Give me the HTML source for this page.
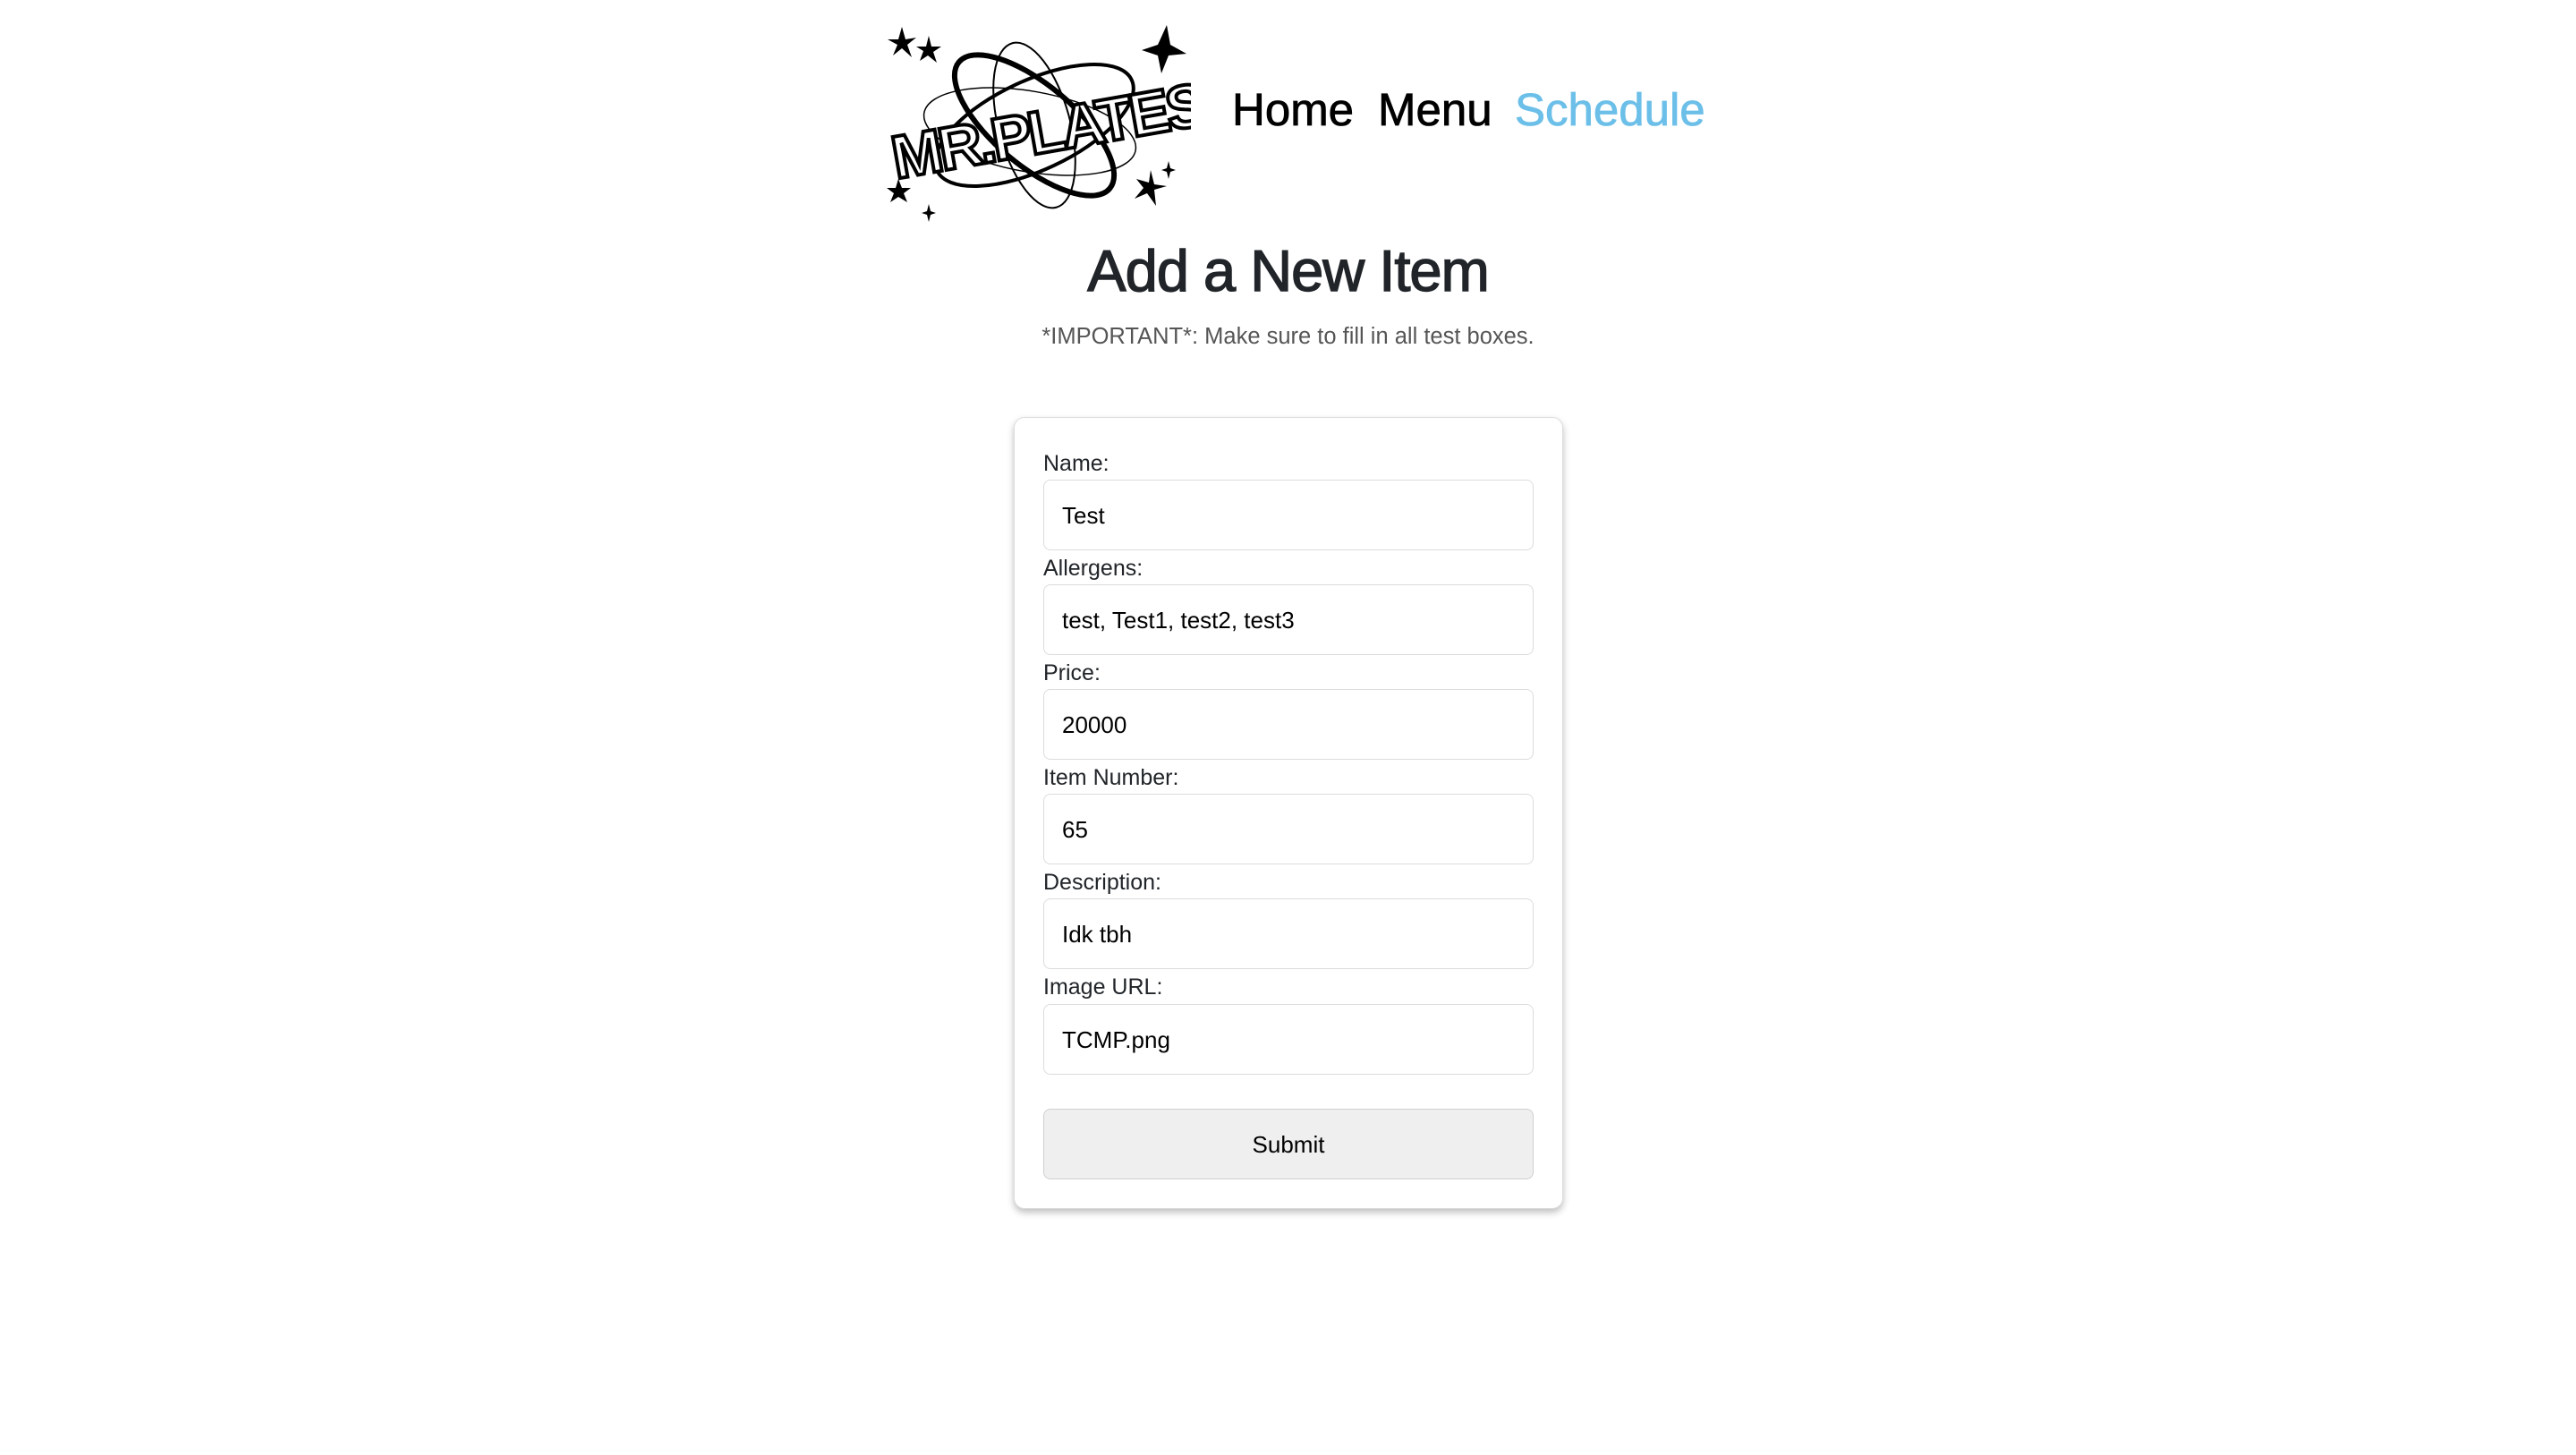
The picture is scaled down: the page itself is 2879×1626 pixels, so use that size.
<!DOCTYPE html>
<html><head><meta charset="utf-8"><style>
html,body{margin:0;padding:0;background:#fff;width:2879px;height:1626px;overflow:hidden;font-family:"Liberation Sans",sans-serif;}
.abs{position:absolute;}
.nav{font-size:51px;top:93px;-webkit-text-stroke:0.8px currentColor;color:#000;}
h1{position:absolute;margin:0;left:0;width:2879px;text-align:center;top:265px;font-size:65px;font-weight:normal;color:#212529;-webkit-text-stroke:1.4px #212529;letter-spacing:-1px;}
.sub{left:0;width:2879px;text-align:center;top:362px;font-size:25.5px;color:#555;}
.card{left:1133px;top:466px;width:614px;height:885px;border:1px solid #ddd;border-radius:12px;box-shadow:0 4px 8px rgba(0,0,0,0.25);box-sizing:border-box;background:#fff;}
.lab{left:1166px;font-size:25px;color:#212529;}
.inp{left:1166px;width:548px;height:79px;border:1.5px solid #dcdcdc;border-radius:8px;box-sizing:border-box;font-size:26px;color:#000;padding-left:20px;line-height:78px;}
.btn{left:1166px;top:1239px;width:548px;height:79px;border:1.5px solid #cfcfcf;border-radius:8px;box-sizing:border-box;background:#efefef;font-size:26px;text-align:center;line-height:78px;color:#000;}
</style></head><body>
<svg class="abs" style="left:986px;top:22px" width="345" height="226" viewBox="0 0 345 226">
 <g fill="#000">
  <polygon points="22,8 26,22 38,20 28,28 33,42 22,32 12,40 17,28 6,22 18,22"/>
  <polygon points="52,18 55,30 66,30 57,36 61,48 51,40 42,46 46,35 38,30 49,30"/>
  <polygon points="318,6 322,28 340,38 320,40 312,60 308,40 290,34 308,28"/>
  <polygon points="18,178 22,188 32,188 24,194 28,204 18,198 9,204 13,194 5,188 15,188"/>
  <polygon points="52,206 54,214 60,216 54,218 52,226 50,218 44,216 50,214"/>
  <polygon points="300,168 304,184 318,186 304,190 306,208 296,194 282,200 292,188 284,178 298,182"/>
  <polygon points="320,158 322,166 328,168 322,170 320,178 318,170 312,168 318,166"/>
 </g>
 <g fill="none" stroke="#000">
  <ellipse cx="170" cy="118" rx="120" ry="50" stroke-width="4" transform="rotate(-25 170 118)"/>
  <ellipse cx="170" cy="118" rx="110" ry="45" stroke-width="6" transform="rotate(40 170 118)"/>
  <ellipse cx="170" cy="118" rx="95" ry="40" stroke-width="2" transform="rotate(75 170 118)"/>
  <ellipse cx="165" cy="125" rx="120" ry="45" stroke-width="1.5" transform="rotate(10 165 125)"/>
 </g>
 <text x="6" y="150" font-family="Liberation Sans" font-weight="bold" font-size="68" fill="#fff" stroke="#000" stroke-width="4" transform="rotate(-10 170 110)" letter-spacing="-4">MR.PLATES</text>
</svg>
<div class="abs nav" style="left:1377px">Home</div>
<div class="abs nav" style="left:1540px">Menu</div>
<div class="abs nav" style="left:1693px;color:#6cbfe8;-webkit-text-stroke:0.8px #6cbfe8">Schedule</div>
<h1>Add a New Item</h1>
<div class="abs sub">*IMPORTANT*: Make sure to fill in all test boxes.</div>
<div class="abs card"></div>
<div class="abs lab" style="top:504px">Name:</div>
<div class="abs inp" style="top:536px">Test</div>
<div class="abs lab" style="top:621px">Allergens:</div>
<div class="abs inp" style="top:653px">test, Test1, test2, test3</div>
<div class="abs lab" style="top:738px">Price:</div>
<div class="abs inp" style="top:770px">20000</div>
<div class="abs lab" style="top:855px">Item Number:</div>
<div class="abs inp" style="top:887px">65</div>
<div class="abs lab" style="top:972px">Description:</div>
<div class="abs inp" style="top:1004px">Idk tbh</div>
<div class="abs lab" style="top:1089px">Image URL:</div>
<div class="abs inp" style="top:1122px">TCMP.png</div>
<div class="abs btn">Submit</div>
</body></html>
